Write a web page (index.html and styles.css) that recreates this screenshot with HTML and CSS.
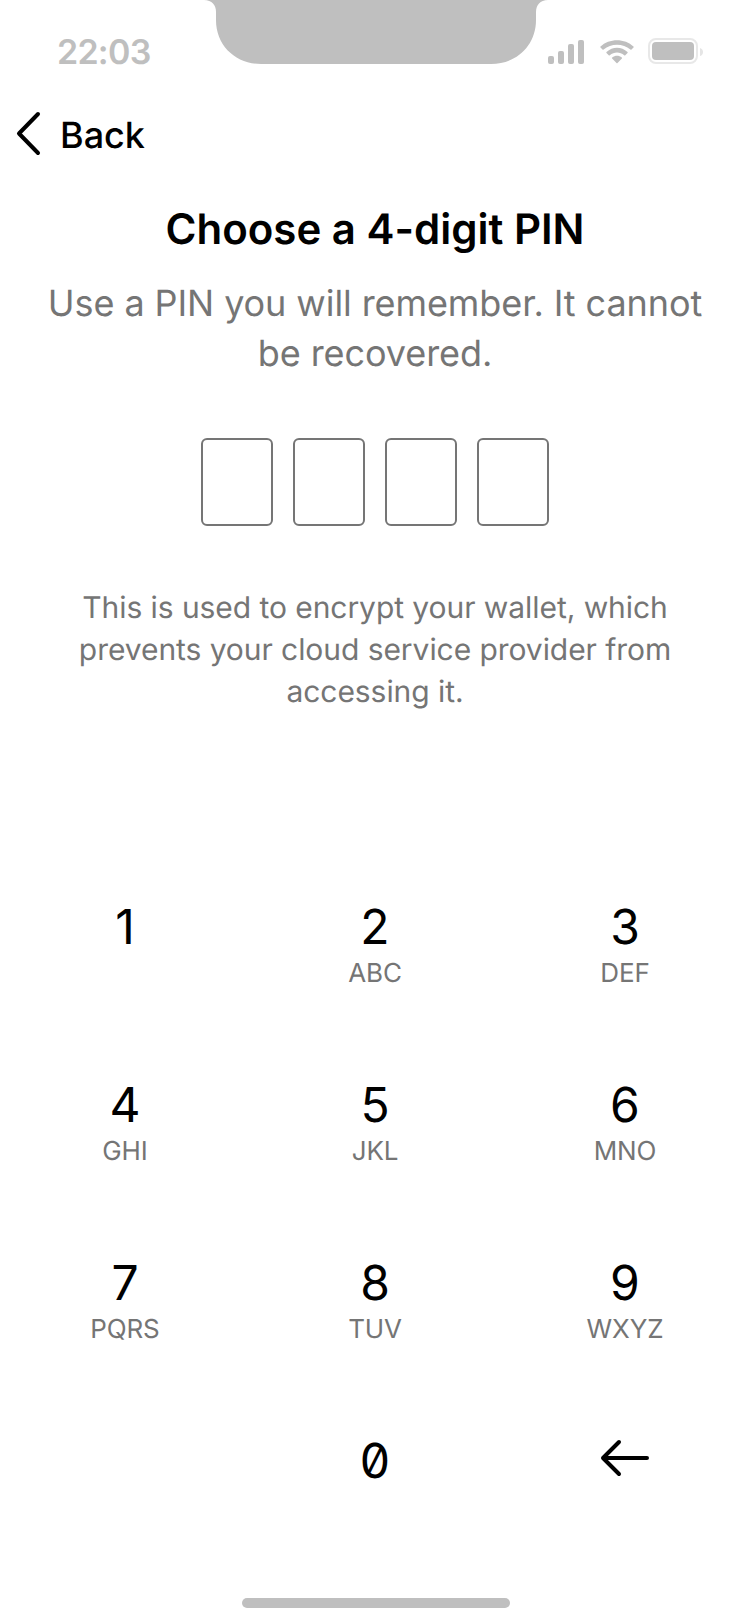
FILE: index.html
```html
<!DOCTYPE html>
<html lang="en">
<head>
<meta charset="utf-8">
<title>Choose a PIN</title>
<link rel="stylesheet" href="styles.css">
</head>
<body>
<div class="screen">
  <header class="status">
    <span class="time">22:03</span>
    <svg class="notch" width="344" height="64" viewBox="0 0 344 64"><path d="M0 0C8 0 12 5 12 12V20C12 46 32 64 57 64H287C312 64 332 46 332 20V12C332 5 336 0 344 0Z" fill="#bfbfbf"/></svg>
    <svg class="indicators" width="156" height="28" viewBox="0 0 156 28" fill="#bfbfbf">
      <rect x="0" y="18" width="6" height="8" rx="2"/><rect x="10" y="13" width="6" height="13" rx="2"/><rect x="20" y="6" width="6" height="20" rx="2"/><rect x="30" y="2" width="6" height="24" rx="2"/>
      <path d="M52.500 8.500C61 0 77 0 85.500 8.500Q86 9.100 85.500 9.500L83.500 11.500Q83 12 82.400 11.500C75 5 63 5 55.600 11.500Q55 12 54.500 11.500L52.500 9.500Q52 9.100 52.500 8.500Z"/>
      <path d="M58.500 14.100C64.500 8.200 73.500 8.200 79.500 14.100Q80 14.600 79.500 15.100L77.300 17.200Q76.800 17.700 76.200 17.200C72 13.700 66 13.700 61.800 17.200Q61.200 17.700 60.700 17.200L58.500 15.100Q58 14.600 58.500 14.100Z"/>
      <path d="M64.200 19.500C67 17.200 71 17.200 73.800 19.500Q74.400 20.100 73.900 20.600L69.500 25Q69 25.500 68.500 25L64.100 20.600Q63.600 20.100 64.200 19.500Z"/>
      <rect x="101" y="1" width="48" height="24" rx="7" fill="none" stroke="#e8e8e8" stroke-width="2"/><rect x="104" y="4" width="42" height="18" rx="4"/><path d="M152 10Q155 11 155 14T152 18Z" fill="#e5e5e5"/>
    </svg>
  </header>
  <nav class="back"><svg width="26" height="46" viewBox="0 0 26 46"><path d="M22 3L3 22.500L22 42" fill="none" stroke="#000" stroke-width="4" stroke-linecap="round" stroke-linejoin="round"/></svg><span>Back</span></nav>
  <main class="content">
    <h1>Choose a 4-digit PIN</h1>
    <p class="lead">Use a PIN you will remember. It cannot<br>be recovered.</p>
    <div class="pin"><i></i><i></i><i></i><i></i></div>
    <p class="note">This is used to encrypt your wallet, which<br>prevents your cloud service provider from<br>accessing it.</p>
  </main>
  <div class="keypad">
    <div class="key"><b>1</b></div><div class="key"><b>2</b><small>ABC</small></div><div class="key"><b>3</b><small>DEF</small></div>
    <div class="key"><b>4</b><small>GHI</small></div><div class="key"><b>5</b><small>JKL</small></div><div class="key"><b>6</b><small>MNO</small></div>
    <div class="key"><b>7</b><small>PQRS</small></div><div class="key"><b>8</b><small>TUV</small></div><div class="key"><b>9</b><small>WXYZ</small></div>
    <div class="key"></div><div class="key"><b class="zero">0</b></div><div class="key"><svg class="erase" width="50" height="38" viewBox="0 0 50 38"><path d="M19 3L3 19L19 35M3 19H47" fill="none" stroke="#000" stroke-width="4" stroke-linecap="round" stroke-linejoin="round"/></svg></div>
  </div>
  <div class="home"></div>
</div>
</body>
</html>
```
FILE: styles.css
```css
* { box-sizing: border-box; }
body { margin: 0; background: #fff; font-family: Inter, sans-serif; color: #000; text-rendering: geometricPrecision; }
.screen { width: 750px; height: 1624px; display: flex; flex-direction: column; overflow: hidden; }
.status { height: 88px; display: flex; align-items: flex-start; }
.time { width: 204px; padding: 32px 0 0 57px; font-size: 34px; line-height: 42px; font-weight: 600; letter-spacing: -0.75px; color: #bfbfbf; }
.notch { flex: none; }
.indicators { margin-top: 38px; flex: none; }
.back { height: 96px; padding: 0 16px 4px; display: flex; align-items: center; gap: 18px; font-size: 36px; font-weight: 500; }
.back span { padding-top: 2px; }
.content { height: 696px; text-align: center; display: flex; flex-direction: column; align-items: center; }
h1 { margin: 20px 0 0; font-size: 42px; line-height: 52px; font-weight: 600; }
.lead { margin: 22px 0 0; font-size: 36px; line-height: 50px; letter-spacing: -0.08px; color: #757575; }
.pin { display: flex; gap: 20px; margin-top: 60px; }
.pin i { width: 72px; height: 88px; border: 2px solid #757575; border-radius: 6px; }
.note { margin: 61px 0 0; font-size: 30px; line-height: 42px; letter-spacing: -0.06px; color: #757575; }
.keypad { height: 712px; display: grid; grid-template-columns: repeat(3, 250px); grid-auto-rows: 178px; }
.key { display: flex; flex-direction: column; align-items: center; padding-top: 18px; }
.key b { font-size: 48px; line-height: 58px; font-weight: 400; }
.key small { margin-top: 1px; font-size: 26px; line-height: 34px; letter-spacing: -0.15px; color: #757575; }
.zero { font-feature-settings: "zero" 1; }
.erase { margin-top: 7px; }
.home { width: 268px; height: 10px; margin: 6px 240px 0 242px; border-radius: 5px; background: #bfbfbf; }
```
